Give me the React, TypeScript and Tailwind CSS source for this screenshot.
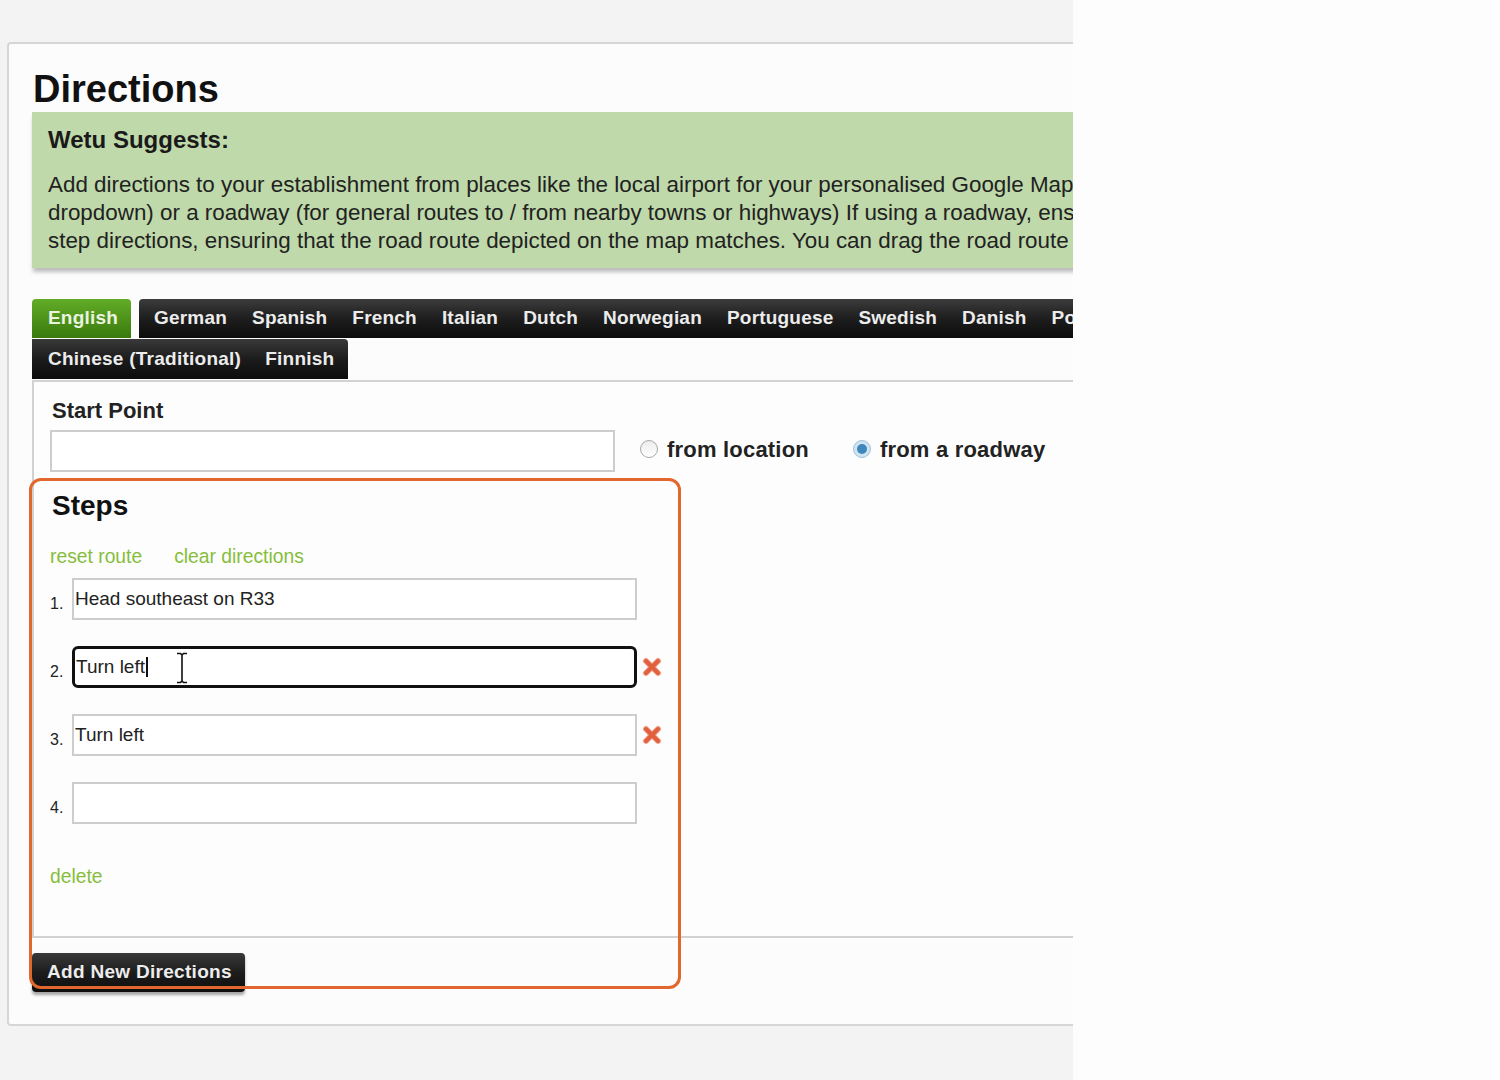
import React from "react";

const LANGS = ["German", "Spanish", "French", "Italian", "Dutch", "Norwegian", "Portuguese", "Swedish", "Danish", "Polish"];

const font = { fontFamily: '"Liberation Sans", Arial, sans-serif' };

function RemoveIcon() {
  return (
    <svg width="22" height="22" viewBox="0 0 22 22" className="ml-[4px] shrink-0">
      <g strokeLinecap="round">
        <line x1="5" y1="5" x2="17" y2="17" stroke="#f2a58c" strokeWidth="6" />
        <line x1="17" y1="5" x2="5" y2="17" stroke="#f2a58c" strokeWidth="6" />
        <line x1="5" y1="5" x2="17" y2="17" stroke="#e0603f" strokeWidth="4" />
        <line x1="17" y1="5" x2="5" y2="17" stroke="#e0603f" strokeWidth="4" />
      </g>
    </svg>
  );
}

function Radio({ checked }: { checked?: boolean }) {
  return (
    <span
      className={
        "inline-flex h-[18px] w-[18px] items-center justify-center rounded-full border " +
        (checked ? "border-[#9fc3dd] bg-[#cfe3f1]" : "border-[#a9a9a9] bg-gradient-to-b from-[#ececec] to-white")
      }
    >
      {checked && <span className="h-[10px] w-[10px] rounded-full bg-[#3f86bd]" />}
    </span>
  );
}

function StepRow({ n, value, focused, removable }: { n: number; value: string; focused?: boolean; removable?: boolean }) {
  return (
    <div className="flex items-center">
      <span className="w-[22px] pt-[10px] text-[16px] text-[#222]">{n}.</span>
      <div
        className={
          "relative flex h-[42px] w-[565px] items-center bg-white pl-[1px] text-[19px] text-[#222] " +
          (focused ? "rounded-[6px] border-[3px] border-[#111]" : "border-2 border-[#cdcdcd]")
        }
      >
        {value}
        {focused && <span className="ml-[1px] inline-block h-[20px] w-[2px] bg-[#111]" />}
        {focused && (
          <svg width="14" height="32" viewBox="0 0 14 32" className="absolute left-[100px] top-[3px]">
            <path d="M2 1.5h3.5L7 3l1.5-1.5H12M7 3v26M2 30.5h3.5L7 29l1.5 1.5H12" fill="none" stroke="#111" strokeWidth="1.6" />
          </svg>
        )}
      </div>
      {removable && <RemoveIcon />}
    </div>
  );
}

export default function App() {
  return (
    <div className="flex h-[1080px] w-[1500px] bg-[#fdfdfd]" style={font}>
      <div className="relative h-[1080px] w-[1073px] overflow-hidden bg-[#f3f3f3] pl-[7px] pt-[42px]">
        <div className="w-[1400px] rounded-[4px] border-2 border-[#d6d6d6] bg-[#fcfcfc] pb-[32px] pl-[23px] pt-[22px]">
          <h1 className="h-[46px] pl-[1px] text-[38px] font-bold leading-[46px] text-[#111]">Directions</h1>

          <div className="bg-[#bfd9aa] pb-[13px] pl-[16px] pt-[16px] text-[#222] shadow-[0_5px_4px_-1px_rgba(0,0,0,0.25)]">
            <div className="text-[24px] font-bold leading-[24px] text-[#1a1a1a]">Wetu Suggests:</div>
            <div className="mt-[19px] whitespace-nowrap text-[22.4px] leading-[28px]">
              <div>Add directions to your establishment from places like the local airport for your personalised Google Maps (select from the</div>
              <div>dropdown) or a roadway (for general routes to / from nearby towns or highways) If using a roadway, ensure you add step by</div>
              <div>step directions, ensuring that the road route depicted on the map matches. You can drag the road route on the map.</div>
            </div>
          </div>

          <div className="mt-[31px] text-[19px] font-bold text-[#ececec]">
            <div className="flex h-[39px] tracking-[0.2px]">
              <div className="flex w-[99px] items-center rounded-t-[4px] bg-gradient-to-b from-[#62ad27] to-[#3a7a0c] pl-[16px] text-[#e9f3e0]">
                English
              </div>
              <div className="ml-[8px] flex flex-1 items-center gap-[25px] rounded-tl-[4px] bg-gradient-to-b from-[#3c3c3c] via-[#1e1e1e] to-[#0c0c0c] pl-[15px]">
                {LANGS.map((l) => (
                  <span key={l}>{l}</span>
                ))}
              </div>
            </div>
            <div className="mt-[1px] flex h-[40px] w-[316px] items-center gap-[24px] rounded-tr-[4px] bg-gradient-to-b from-[#3a3a3a] via-[#1c1c1c] to-[#0c0c0c] pl-[16px] tracking-[0.25px]">
              <span>Chinese (Traditional)</span>
              <span>Finnish</span>
            </div>
          </div>

          <div className="mt-[1px] border-2 border-r-0 border-[#d2d2d2] bg-[#fdfdfd] pb-[48px] pl-[16px] pt-[17px] text-[#222]">
            <div className="h-[24px] pl-[2px] text-[22px] font-bold leading-[24px]">Start Point</div>
            <div className="mt-[7px] flex items-center">
              <div className="h-[42px] w-[565px] border-2 border-[#cdcdcd] bg-white" />
              <label className="mb-[4px] ml-[25px] flex items-center gap-[9px] text-[22px] font-bold tracking-[0.2px]">
                <Radio />
                from location
              </label>
              <label className="mb-[4px] ml-[44px] flex items-center gap-[9px] text-[22px] font-bold tracking-[0.2px]">
                <Radio checked />
                from a roadway
              </label>
            </div>

            <div className="mt-[19px] h-[30px] pl-[2px] text-[28px] font-bold leading-[30px] text-[#111]">Steps</div>
            <div className="mt-[25px] flex h-[22px] items-center gap-[32px] text-[19.3px] text-[#86bd3c]">
              <span>reset route</span>
              <span>clear directions</span>
            </div>

            <div className="mt-[10px] flex flex-col gap-[26px]">
              <StepRow n={1} value="Head southeast on R33" />
              <StepRow n={2} value="Turn left" focused removable />
              <StepRow n={3} value="Turn left" removable />
              <StepRow n={4} value="" />
            </div>

            <div className="mt-[42px] h-[22px] text-[19.3px] leading-[22px] text-[#86bd3c]">delete</div>
          </div>

          <button className="mt-[15px] flex h-[39px] w-[213px] items-center rounded-[4px] bg-gradient-to-b from-[#3a3a3a] via-[#1d1d1d] to-[#0e0e0e] pl-[15px] text-[19px] font-bold tracking-[0.3px] text-[#ececec] shadow-[0_3px_3px_rgba(0,0,0,0.35)]">
            Add New Directions
          </button>
        </div>

        <div className="pointer-events-none absolute left-[29px] top-[478px] h-[511px] w-[652px] rounded-[12px] border-[3px] border-[#e2672f]" />
      </div>
    </div>
  );
}
